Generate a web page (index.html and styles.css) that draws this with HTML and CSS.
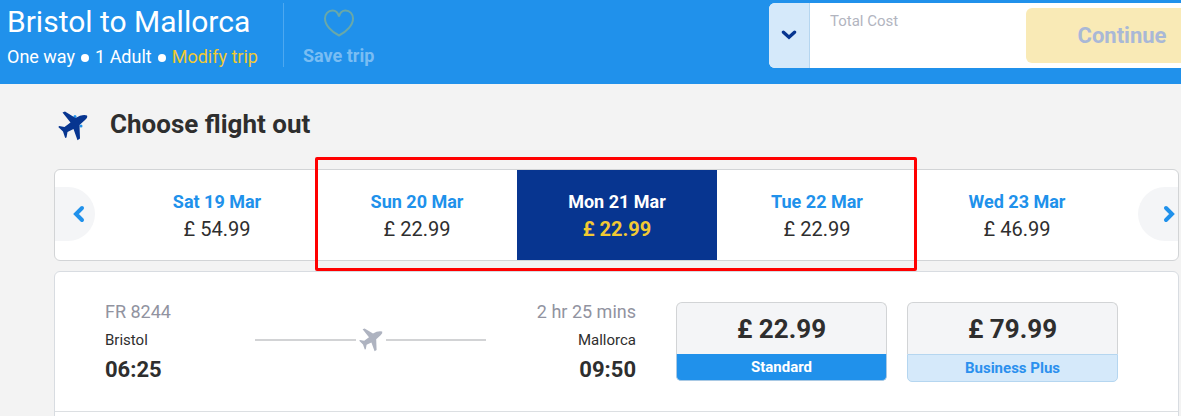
FILE: index.html
```html
<!DOCTYPE html>
<html lang="en">
<head>
    <meta charset="UTF-8">
    <meta name="viewport" content="width=device-width, initial-scale=1.0">
    <title>Bristol to Mallorca</title>
    <link rel="stylesheet" href="styles.css">
</head>
<body>
    <svg class="sprite" aria-hidden="true">
        <symbol id="plane" viewBox="0 0 30 30">
            <path d="M4.500 1.500 L7 .6 L17.500 7 L22 4.800 Q26.500 3.200 29 4.500 Q30 6.500 27 9 L21.500 14 L22 27.500 L19.500 29.200 L15.500 18 L9.500 21 L8.500 26.500 L7.200 27 L5 20.500 L.3 16 L1.200 15 L6.500 16 L12.500 11.500 Z"/>
        </symbol>
    </svg>

    <header class="header">
        <div class="trip">
            <h1 class="trip-title">Bristol to Mallorca</h1>
            <div class="trip-details">
                <span>One way</span>
                <span class="dot"></span>
                <span>1 Adult</span>
                <span class="dot"></span>
                <a class="modify" href="#">Modify trip</a>
            </div>
        </div>
        <button class="save" type="button">
            <svg class="heart" viewBox="0 0 30 28" aria-hidden="true">
                <path d="M15 7.500 C14 3.500 11.500 1.500 8.500 1.500 C4 1.500 1 5 1 9.500 C1 16 7 22.500 15 26.500 C23 22.500 29 16 29 9.500 C29 5 26 1.500 21.500 1.500 C18.500 1.500 16 3.500 15 7.500 Z"/>
            </svg>
            Save trip
        </button>
        <div class="basket">
            <button class="basket-toggle" type="button" aria-label="Show price breakdown">
                <svg class="chevron-down" viewBox="0 0 14 9" aria-hidden="true"><path d="M2 2 L7 6.500 L12 2"/></svg>
            </button>
            <div class="basket-total">Total Cost</div>
            <button class="continue" type="button">Continue</button>
        </div>
    </header>

    <main class="main">
        <div class="heading">
            <svg class="heading-plane" viewBox="0 0 30 30" aria-hidden="true">
                <circle class="engine" cx="17" cy="5.500" r="1.500"/>
                <circle class="engine" cx="23" cy="15" r="1.500"/>
                <use href="#plane"/>
            </svg>
            <h2>Choose flight out</h2>
        </div>

        <div class="carousel">
            <button class="arrow prev" type="button" aria-label="Earlier dates">
                <svg viewBox="0 0 12 18" aria-hidden="true"><path d="M9 3 L3 9 L9 15"/></svg>
            </button>
            <button class="day" type="button">
                <span class="date">Sat 19 Mar</span>
                <span class="price">£ 54.99</span>
            </button>
            <button class="day" type="button">
                <span class="date">Sun 20 Mar</span>
                <span class="price">£ 22.99</span>
            </button>
            <button class="day selected" type="button">
                <span class="date">Mon 21 Mar</span>
                <span class="price">£ 22.99</span>
            </button>
            <button class="day" type="button">
                <span class="date">Tue 22 Mar</span>
                <span class="price">£ 22.99</span>
            </button>
            <button class="day" type="button">
                <span class="date">Wed 23 Mar</span>
                <span class="price">£ 46.99</span>
            </button>
            <button class="arrow next" type="button" aria-label="Later dates">
                <svg viewBox="0 0 12 18" aria-hidden="true"><path d="M3 3 L9 9 L3 15"/></svg>
            </button>
            <div class="highlight"></div>
        </div>

        <div class="flights">
            <div class="flight">
                <div class="info">
                    <div class="airport">
                        <span class="muted">FR 8244</span>
                        <span class="city">Bristol</span>
                        <span class="time">06:25</span>
                    </div>
                    <div class="route">
                        <svg class="route-plane" aria-hidden="true"><use href="#plane"/></svg>
                    </div>
                    <div class="airport arrival">
                        <span class="muted">2 hr 25 mins</span>
                        <span class="city">Mallorca</span>
                        <span class="time">09:50</span>
                    </div>
                </div>
                <div class="fares">
                    <button class="fare standard" type="button">
                        <span class="fare-price">£ 22.99</span>
                        <span class="fare-name">Standard</span>
                    </button>
                    <button class="fare business" type="button">
                        <span class="fare-price">£ 79.99</span>
                        <span class="fare-name">Business Plus</span>
                    </button>
                </div>
            </div>
        </div>
    </main>
</body>
</html>
```
FILE: styles.css
```css
* {
    box-sizing: border-box;
}
body {
    margin: 0;
    font-family: Roboto, Arial, sans-serif;
    color: #2e2e2e;
    background-color: #f3f3f3;
    overflow-x: hidden;
}
button {
    padding: 0;
    border: none;
    background: none;
    font-family: inherit;
    color: inherit;
    cursor: pointer;
}
h1, h2 {
    margin: 0;
}
.sprite {
    display: none;
}

/* Header */
.header {
    display: flex;
    align-items: flex-start;
    padding: 3px 0 16px 7px;
    background-color: #2091eb;
    color: #fff;
}
.trip {
    padding-right: 25px;
    border-right: 1px solid #4da8f0;
}
.trip-title {
    font-size: 30px;
    line-height: 38px;
    font-weight: 400;
}
.trip-details {
    display: flex;
    align-items: center;
    gap: 6px;
    padding-top: 6px;
    font-size: 18px;
    line-height: 20px;
}
.dot {
    width: 8px;
    height: 8px;
    margin-top: 2px;
    border-radius: 4px;
    background-color: #fff;
}
.modify {
    color: #f1c933;
    text-decoration: none;
}
.save {
    display: flex;
    flex-direction: column;
    align-items: center;
    gap: 8px;
    padding: 6px 19px 0;
    font-size: 18px;
    line-height: 22px;
    font-weight: 700;
    color: #79bdf3;
}
.heart {
    width: 30px;
    height: 28px;
    fill: none;
    stroke: #69a8a8;
    stroke-width: 2;
}
.basket {
    display: flex;
    width: 412px;
    height: 65px;
    margin-left: auto;
    border-radius: 6px 0 0 6px;
    background-color: #fff;
    overflow: hidden;
}
.basket-toggle {
    width: 41px;
    border-right: 1px solid #b5d6f0;
    background-color: #d5e9fa;
}
.chevron-down {
    width: 16px;
    height: 10px;
    fill: none;
    stroke: #073590;
    stroke-width: 3;
    stroke-linecap: round;
}
.basket-total {
    flex: 1;
    padding: 8px 20px;
    font-size: 15px;
    line-height: 20px;
    color: #b2b5bf;
}
.continue {
    width: 155px;
    margin: 5px 0;
    padding-left: 37px;
    border-radius: 6px 0 0 6px;
    background-color: #f9eab6;
    color: #a9b8d6;
    font-size: 22px;
    font-weight: 700;
}

/* Flight list */
.main {
    padding: 20px 2px 0 54px;
}
.heading {
    display: flex;
    align-items: center;
    gap: 22px;
    padding-left: 4px;
    margin-bottom: 25px;
}
.heading h2 {
    font-size: 26px;
    line-height: 40px;
    font-weight: 700;
}
.heading-plane {
    width: 30px;
    height: 30px;
    margin-top: 4px;
    fill: #073590;
}
.engine {
    fill: #2091eb;
}

.carousel {
    position: relative;
    display: grid;
    grid-template-columns: 62px repeat(5, 1fr) 61px;
    height: 92px;
    border: 1px solid #d2d4d6;
    border-radius: 6px;
    background-color: #fff;
}
.arrow {
    display: flex;
    align-items: center;
    align-self: center;
    width: 40px;
    height: 54px;
    margin-bottom: 2px;
    background-color: #f4f5f7;
}
.arrow svg {
    width: 12px;
    height: 18px;
    fill: none;
    stroke: #2091eb;
    stroke-width: 4;
    stroke-linecap: round;
}
.prev {
    padding-left: 18px;
    border-radius: 0 27px 27px 0;
}
.next {
    justify-self: end;
    justify-content: flex-end;
    padding-right: 3px;
    border-radius: 27px 0 0 27px;
}
.day {
    display: flex;
    flex-direction: column;
    align-items: center;
    padding-top: 18px;
}
.date {
    font-size: 18px;
    line-height: 28px;
    font-weight: 700;
    color: #2091eb;
}
.price {
    font-size: 20px;
    line-height: 26px;
}
.selected {
    background-color: #073590;
}
.selected .date {
    color: #fff;
}
.selected .price {
    color: #f1c933;
    font-weight: 700;
}
/* Frame round the three middle days */
.highlight {
    position: absolute;
    grid-column: 3 / 6;
    inset: -13px 0 -11px -2px;
    border: 3px solid #f00;
    border-radius: 2px;
    pointer-events: none;
}

.flights {
    margin-top: 10px;
    padding-bottom: 20px;
    border: 1px solid #d8dce1;
    border-radius: 6px;
    background-color: #fff;
}
.flight {
    display: flex;
    justify-content: space-between;
    gap: 40px;
    padding: 26px 60px 25px 50px;
    border-bottom: 1px solid #dcdfe2;
}
.info {
    display: flex;
    flex: 1;
    justify-content: space-between;
}
.airport {
    display: flex;
    flex-direction: column;
    width: 110px;
}
.arrival {
    align-items: flex-end;
}
.muted {
    font-size: 18px;
    line-height: 28px;
    color: #9193a0;
    white-space: nowrap;
}
.city {
    font-size: 15px;
    line-height: 28px;
}
.time {
    font-size: 22px;
    line-height: 32px;
    font-weight: 700;
}
.route {
    display: flex;
    flex: 1;
    align-items: center;
    align-self: flex-start;
    gap: 3px;
    margin: 30px 40px 0;
}
.route::before,
.route::after {
    content: "";
    flex: 1;
    height: 2px;
    background-color: #d2d3d5;
}
.route-plane {
    width: 24px;
    height: 24px;
    fill: #aeb3c0;
}
.fares {
    display: flex;
    gap: 20px;
    padding-top: 4px;
}
.fare {
    display: flex;
    flex-direction: column;
    width: 211px;
}
.fare-price {
    width: 100%;
    padding-top: 2px;
    border: 1px solid #d2d4d6;
    border-bottom: none;
    border-radius: 6px 6px 0 0;
    background-color: #f4f5f7;
    font-size: 26px;
    line-height: 49px;
    font-weight: 700;
}
.fare-name {
    width: 100%;
    border: 1px solid #b5d6f0;
    border-radius: 0 0 5px 5px;
    font-size: 15px;
    line-height: 26px;
    font-weight: 700;
}
.standard .fare-name {
    border-color: #a9c9e4;
    border-top: none;
    background-color: #2091eb;
    color: #fff;
}
.business .fare-name {
    background-color: #d5e9fa;
    color: #2b90ee;
}
```
